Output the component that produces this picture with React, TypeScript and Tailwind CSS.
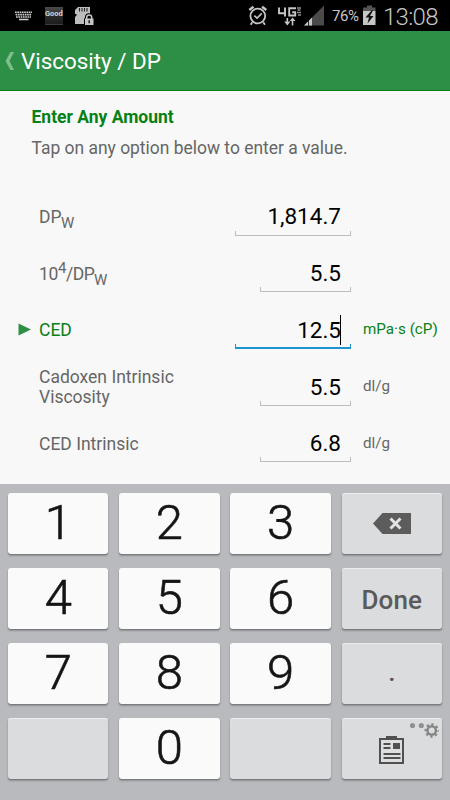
import React from 'react';

type Field = {
  id: string;
  label: React.ReactNode;
  value: string;
  unit?: string;
  wide?: boolean;
  active?: boolean;
};

const fields: Field[] = [
  {
    id: 'dpw',
    label: (
      <>
        DP<span className="relative top-[5px] -ml-[0.5px] text-[15px] leading-none tracking-[-0.5px]">W</span>
      </>
    ),
    value: '1,814.7',
    wide: true
  },
  {
    id: 'inverse',
    label: (
      <span className="tracking-[-0.4px]">
        10<span className="relative -top-[7px] text-[15px] leading-none">4</span>/DP
        <span className="relative top-[5px] -ml-[0.5px] text-[15px] leading-none">W</span>
      </span>
    ),
    value: '5.5'
  },
  { id: 'ced', label: 'CED', value: '12.5', unit: 'mPa·s (cP)', wide: true, active: true },
  { id: 'cadoxen', label: 'Cadoxen Intrinsic Viscosity', value: '5.5', unit: 'dl/g' },
  { id: 'cedIntrinsic', label: 'CED Intrinsic', value: '6.8', unit: 'dl/g' }
];

function StatusBar() {
  return (
    <div className="flex h-[31px] items-center bg-black text-[#c6c6c6]">
      {/* keyboard, Good, sd card */}
      <svg width="110" height="31" viewBox="0 0 110 31">
        <g stroke="#d0d0d0" fill="none">
          <path d="M15 12.2h17M15.6 14.6h16M16 17h15" strokeWidth="1.6" strokeDasharray="1.7 .6" />
          <path d="M19 19.5h9.5" strokeWidth="1.5" />
        </g>
        <defs>
          <linearGradient id="good" x1="0" y1="0" x2="0" y2="1">
            <stop offset="0" stopColor="#4c4c4c" />
            <stop offset="0.45" stopColor="#2c2c2c" />
            <stop offset="1" stopColor="#1b1b1b" />
          </linearGradient>
        </defs>
        <rect x="45" y="7" width="18" height="18" fill="url(#good)" />
        <path d="M45 24.5h18" stroke="#3c3c3c" />
        <text x="45" y="15.8" textLength="17.8" lengthAdjust="spacingAndGlyphs" fontSize="8" fontWeight="700" fontFamily="Roboto, sans-serif" fill="#d6d6d6">
          Good
        </text>
        <path d="M78 7h12v8l-5 2v7H75v-7l1.5-1.5V14H75v-4z" fill="#bdbdbd" />
        <path d="M79.5 8v3.5M82 8v3.5M84.500 8v3.5M87 8v3.5" stroke="#222" strokeWidth="1.1" />
        <path d="M84 18.2h1v-1a4 4 0 0 1 8 0v1h1V26H84z" fill="#000" />
        <rect x="85" y="18.500" width="8.5" height="6.5" fill="#c6c6c6" />
        <path d="M86.7 19v-1.5a2.5 2.5 0 0 1 5 0V19" fill="none" stroke="#c6c6c6" strokeWidth="1.5" />
        <path d="M89.2 20.3v3" stroke="#111" strokeWidth="1.4" />
      </svg>
      <svg className="ml-[138px]" width="78" height="31" viewBox="248 0 78 31">
        {/* alarm */}
        <g fill="none" stroke="#c6c6c6">
          <circle cx="257.8" cy="16" r="7.4" strokeWidth="1.8" />
          <path d="M254.3 15.6l2.8 2.5 4.700-4.700" strokeWidth="1.6" />
          <path d="M249.300 10l4.200-3.300M266.300 10l-4.200-3.300" strokeWidth="2.4" />
          <path d="M252.300 22.200l-1.600 2.500M263.300 22.200l1.600 2.500" strokeWidth="1.8" />
        </g>
        {/* 4G LTE */}
        <path d="M279 7.500v5.700h7M285 7.500v9M296 8.200h-6.800v7.300h6v-3.300h-3" fill="none" stroke="#c6c6c6" strokeWidth="1.900" />
        <path d="M297 8h4M297.500 10h3M297 12.500h4M298 15h3" stroke="#8d8d8d" strokeWidth="1.300" />
        <path d="M286.500 18v3.500h-2.300l3.100 4 3.100-4h-2.300V18zM291.700 25.500V21h-2l2.900-3.500 2.900 3.500h-2.200v4.500z" fill="#c6c6c6" />
        {/* signal */}
        <path d="M324 5.500v20h-20z" fill="#4a4a4a" />
        <path d="M312 17.500v8h-8z" fill="#c6c6c6" />
        <path d="M308.500 20v6" stroke="#000" strokeWidth=".8" />
      </svg>
      <span className="ml-[6px] w-[28px] pt-[2px] text-[15px] leading-none tracking-[-0.4px] whitespace-nowrap">76%</span>
      <svg className="ml-[1px]" width="16" height="31" viewBox="361 0 16 31">
        <path d="M367 5.5h5v2h3.5V11H363V7.5h4z" fill="#555" />
        <path d="M363 11h12.5v14H363z" fill="#c6c6c6" />
        <path d="M371.5 10.5l-6 7h3.5l-1.5 6 6-7.5H370l3-5.5z" fill="#111" />
      </svg>
      <span className="ml-[6px] pt-[2px] text-[24px] leading-none font-light tracking-[-0.7px] whitespace-nowrap">13:08</span>
    </div>
  );
}

function FieldRow({ field }: { field: Field }) {
  return (
    <div className="flex h-[56.7px] items-center">
      <div className="w-[21px] shrink-0">
        {field.active && (
          <svg width="13" height="13" viewBox="0 0 13 13">
            <path d="M0.5 0.5v12L13 6.5z" fill="#2f8f43" />
          </svg>
        )}
      </div>
      <div
        className={`w-[150px] shrink-0 pt-[2px] text-[17.5px] leading-[20.5px] ${
          field.active ? 'text-[#078015]' : 'text-[#666]'
        }`}
      >
        {field.label}
      </div>
      <div className="flex w-[163px] shrink-0 justify-end self-stretch pr-px">
        <div className={`flex h-full flex-col justify-end pb-[9px] ${field.wide ? 'w-[116px]' : 'w-[91px]'}`}>
          <div className="flex h-[28px] items-center justify-end pr-[10px] text-[22.5px] leading-none text-black">
            {field.value}
            {field.active && <span className="-ml-px h-[30px] w-px shrink-0 bg-black" />}
          </div>
          <div
            className={`h-[5px] border-x ${
              field.active ? 'border-b-2 border-[#1c96cf]' : 'border-b border-[#bdbdbd]'
            }`}
          />
        </div>
      </div>
      {field.unit && (
        <div className={`ml-[11px] text-[15.2px] whitespace-nowrap ${field.active ? 'text-[#078015]' : 'text-[#666]'}`}>
          {field.unit}
        </div>
      )}
    </div>
  );
}

function Key({ children, dark }: { children?: React.ReactNode; dark?: boolean }) {
  return (
    <button
      className={`relative flex h-[61px] items-center justify-center rounded-[3px] ${
        dark
          ? 'bg-[#dbdcde] shadow-[inset_0_1px_0_#ebecee,0_1px_1px_#77797c,0_2px_2px_#919397]'
          : 'bg-[#fafafa] shadow-[0_1px_1px_#77797c,0_2px_2px_#919397]'
      }`}
    >
      {children}
    </button>
  );
}

function Digit({ n }: { n: string }) {
  return (
    <Key>
      <span className="pb-[2px] text-[49px] leading-none font-light text-[#151515] [-webkit-text-stroke:0.6px_#151515]">{n}</span>
    </Key>
  );
}

function Keyboard() {
  return (
    <div className="grid h-[316px] grid-cols-4 content-start gap-x-[10.7px] gap-y-[14px] bg-[#b9babe] px-[8px] pt-[9px]">
      <Digit n="1" />
      <Digit n="2" />
      <Digit n="3" />
      <Key dark>
        <svg width="38" height="21" viewBox="0 0 38 21">
          <path d="M0 10.5L9.5 0H38v21H9.5z" fill="#5c5c5c" />
          <path d="M17.5 5.5l10 10M27.5 5.5l-10 10" stroke="#e2e2e4" strokeWidth="3" />
        </svg>
      </Key>
      <Digit n="4" />
      <Digit n="5" />
      <Digit n="6" />
      <Key dark>
        <span className="pt-[3px] text-[26px] leading-none font-medium tracking-[0.1px] text-[#5a5a5a]">Done</span>
      </Key>
      <Digit n="7" />
      <Digit n="8" />
      <Digit n="9" />
      <Key dark>
        <span className="pb-[3px] text-[26px] leading-none font-medium text-[#555]">.</span>
      </Key>
      <Key dark />
      <Digit n="0" />
      <Key dark />
      <Key dark>
        <svg width="25" height="28" viewBox="0 0 25 28" className="mt-[3px]">
          <path d="M7 0h11v3H7z" fill="#505050" />
          <path d="M1 3h23v24H1z" fill="#dededf" stroke="#505050" strokeWidth="2" />
          <path d="M4.5 8h7M4.5 12h7M4.5 18h17M4.5 22h17" stroke="#505050" strokeWidth="2" />
          <path d="M14 7h7v6h-7z" fill="#505050" />
        </svg>
        <svg className="absolute top-[3px] right-[1px]" width="32" height="18" viewBox="0 0 32 18">
          <circle cx="3.5" cy="4.5" r="2.6" fill="#909090" />
          <circle cx="12.3" cy="4.5" r="2.6" fill="#909090" />
          <g fill="none" stroke="#858585">
            <circle cx="22.7" cy="9.5" r="4.2" strokeWidth="2.4" />
            <circle cx="22.7" cy="9.5" r="6" strokeWidth="2.4" strokeDasharray="2.2 2.512" strokeDashoffset="1.1" />
          </g>
        </svg>
      </Key>
    </div>
  );
}

export default function App() {
  return (
    <div className="flex h-[800px] w-[450px] flex-col overflow-hidden bg-[#f8f8f8] font-['Roboto',sans-serif]">
      <StatusBar />
      <header className="flex h-[60px] items-center border-b border-[#0b7d17] bg-[#2d8f45] pl-[5px] text-white">
        <svg width="9" height="18" viewBox="0 0 9 18">
          <path d="M5.5 0H9L4.5 9 9 18H5.5L0.5 9z" fill="#81bd8f" />
        </svg>
        <h1 className="ml-[7px] pt-[3px] text-[22.4px]">Viscosity / DP</h1>
      </header>
      <main className="h-[393px] pt-[14px] pl-[18px]">
        <h2 className="pl-[13.5px] text-[17.5px] leading-[24px] font-bold text-[#078015]">Enter Any Amount</h2>
        <p className="mt-[6px] pl-[13.5px] text-[17.45px] leading-[26px] text-[#666]">Tap on any option below to enter a value.</p>
        <div className="mt-[27px]">
          {fields.map((field) => (
            <FieldRow key={field.id} field={field} />
          ))}
        </div>
      </main>
      <Keyboard />
    </div>
  );
}
